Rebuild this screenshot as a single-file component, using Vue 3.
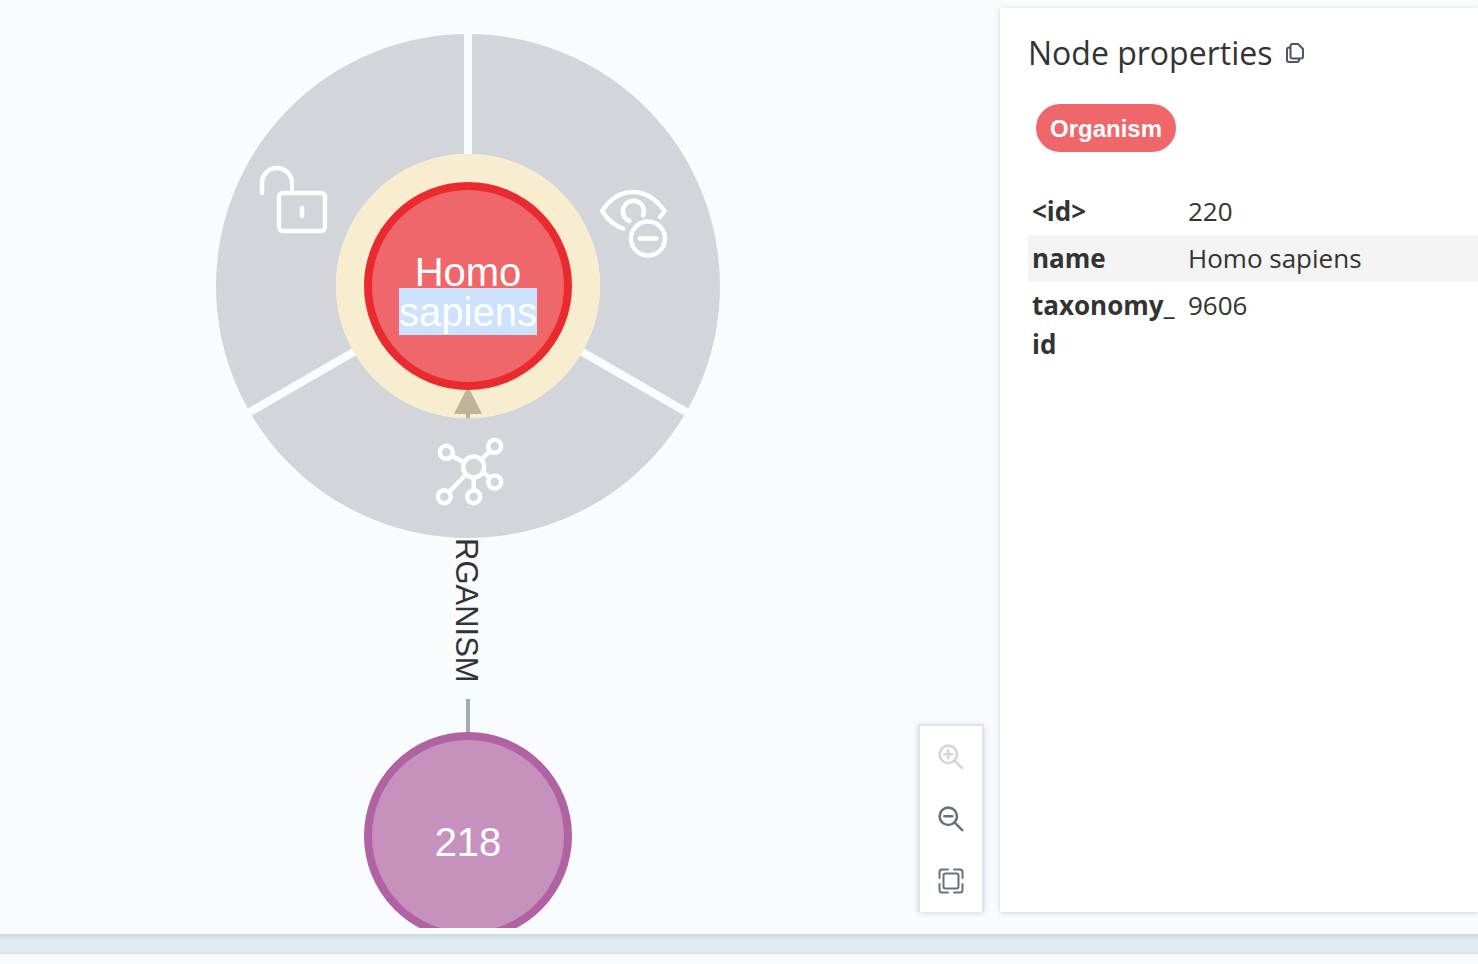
<script setup>
import { ref } from 'vue'

const centre = { x: 468, y: 286 }
const properties = ref([
  { key: '<id>', value: '220' },
  { key: 'name', value: 'Homo sapiens' },
  { key: 'taxonomy_id', value: '9606' }
])
</script>

<template>
  <div class="page">
    <main class="frame">
      <section class="canvas" aria-label="Graph">
        <svg class="graph" viewBox="0 0 1000 928" preserveAspectRatio="xMidYMin slice">
          <!-- relationship -->
          <line class="edge" x1="468" y1="699" x2="468" y2="734" />
          <text class="edge-label" transform="translate(456 538) rotate(90)">RGANISM</text>

          <!-- context menu ring -->
          <circle class="menu-ring" :cx="centre.x" :cy="centre.y" r="192" />
          <g class="menu-gap" :transform="`translate(${centre.x} ${centre.y})`">
            <line x1="0" y1="-120" x2="0" y2="-256" />
            <line x1="0" y1="-120" x2="0" y2="-256" transform="rotate(120)" />
            <line x1="0" y1="-120" x2="0" y2="-256" transform="rotate(240)" />
          </g>
          <circle class="halo" :cx="centre.x" :cy="centre.y" r="132" />
          <path class="arrow" d="M468 386 L482 414 H470 V418 H466 V414 H454 Z" />

          <!-- nodes -->
          <circle class="node organism" :cx="centre.x" :cy="centre.y" r="100" />
          <text class="caption" x="468" y="286">Homo</text>
          <rect class="selection" x="399" y="288" width="138" height="47" />
          <text class="caption" x="468" y="326">sapiens</text>
          <circle class="node protein" cx="468" cy="836" r="100" />
          <text class="caption" x="468" y="856">218</text>

          <!-- unlock -->
          <g class="menu-icon">
            <path d="M262 193 V183 A15 15 0 0 1 292 183" />
            <path class="thin" d="M292 183 V192" />
            <rect x="279" y="193" width="46" height="38" rx="4" />
            <path d="M302 208 V216" />
          </g>
          <!-- hide -->
          <g class="menu-icon">
            <path d="M623 228.500 C615 226 608 220 602 211 C610 199 621 192 633 192 C646 192 656 199 664.500 211 Q662.500 214.500 660 217" />
            <path d="M629.500 221 A10.500 10.500 0 1 1 643 215.500" />
            <circle cx="648" cy="238.500" r="17" />
            <path d="M639.500 238.500 H656.500" />
          </g>
          <!-- expand -->
          <g class="menu-icon">
            <circle cx="473.700" cy="467" r="10.500" />
            <circle cx="446.300" cy="452.300" r="6.500" />
            <circle cx="494.700" cy="446.300" r="6.500" />
            <circle cx="494.700" cy="482" r="6.500" />
            <circle cx="473.700" cy="496.700" r="6.500" />
            <circle cx="444.300" cy="496.700" r="6.500" />
            <path d="M452.500 456 L464 462.500 M490 451 L481.500 459.500 M490 477.500 L482.500 472 M473.700 478 V490 M449 492 L466 474.500" />
          </g>
        </svg>

        <div class="zoom">
          <button type="button" aria-label="Zoom in" disabled>
            <svg width="26" height="26" viewBox="0 0 26 26">
              <circle cx="10.300" cy="10.300" r="8.700" />
              <path d="M16.700 16.700 L24.200 24.200 M6.300 10.300 H14.300 M10.300 6.300 V14.300" />
            </svg>
          </button>
          <button type="button" aria-label="Zoom out">
            <svg width="26" height="26" viewBox="0 0 26 26">
              <circle cx="10.300" cy="10.300" r="8.700" />
              <path d="M16.700 16.700 L24.200 24.200 M6.300 10.300 H14.300" />
            </svg>
          </button>
          <button type="button" aria-label="Zoom to fit">
            <svg class="fit" width="26" height="26" viewBox="0 0 26 26">
              <rect x="5.500" y="5.500" width="15" height="15" rx="2" />
              <path d="M1.500 10 V4 Q1.500 1.500 4 1.500 H10 M16 1.500 H22 Q24.500 1.500 24.500 4 V10 M24.500 16 V22 Q24.500 24.500 22 24.500 H16 M10 24.500 H4 Q1.500 24.500 1.500 22 V16" />
            </svg>
          </button>
        </div>
      </section>

      <aside class="panel">
        <header class="head">
          <h2>Node properties</h2>
          <button type="button" class="copy" aria-label="Copy properties">
            <svg width="20" height="22" viewBox="0 0 20 22">
              <path d="M7.500 2 H13 L18 7 V14.500 Q18 16.500 16 16.500 H7.500 Q5.500 16.500 5.500 14.500 V4 Q5.500 2 7.500 2 Z" />
              <path d="M5.500 5.500 H4 Q2 5.500 2 7.500 V18 Q2 20 4 20 H12 Q14 20 14 18 V16.500" />
            </svg>
          </button>
        </header>
        <button type="button" class="chip">Organism</button>
        <table class="props">
          <tbody>
            <tr v-for="p in properties" :key="p.key">
              <th scope="row">{{ p.key }}</th>
              <td>{{ p.value }}</td>
            </tr>
          </tbody>
        </table>
      </aside>
    </main>
    <div class="divider"></div>
    <div class="next-frame"></div>
  </div>
</template>

<style>
html,
body {
  margin: 0;
  background: #f9fcff;
}
</style>

<style scoped>
.page {
  display: flex;
  flex-direction: column;
  min-height: 100vh;
  overflow: hidden;
  font-family: "Open Sans", "Noto Sans", sans-serif;
  color: #333;
}
.frame {
  flex: 1;
  display: grid;
  grid-template-columns: minmax(0, 1fr) 478px;
  background: #f9fcff;
}
.divider {
  height: 20px;
  background: linear-gradient(#c8d3da, #d8e2ea 3px, #e0eaf3 7px, #e0eaf3 17px, #d3dee6);
}
.next-frame {
  height: 10px;
  background: #f9fcff;
}
.canvas {
  position: relative;
  padding-bottom: 6px;
}
.graph {
  display: block;
  width: 100%;
  height: 100%;
}
.edge {
  stroke: #a5abb6;
  stroke-width: 4;
}
.edge-label {
  font: 31px "Liberation Sans", Arial, sans-serif;
  fill: #333;
}
.menu-ring {
  fill: none;
  stroke: #d2d5da;
  stroke-width: 120;
}
.menu-gap {
  stroke: #f9fcff;
  stroke-width: 8;
}
.halo {
  fill: #f9edd0;
}
.arrow {
  fill: #bfb49b;
}
.node {
  stroke-width: 8;
}
.organism {
  fill: #ef676b;
  stroke: #e92a2f;
}
.protein {
  fill: #c791be;
  stroke: #b062a3;
}
.selection {
  fill: #cce2ff;
}
.caption {
  font: 40px "Liberation Sans", Arial, sans-serif;
  fill: #fff;
  text-anchor: middle;
}
.menu-icon {
  fill: none;
  stroke: #fff;
  stroke-width: 4.4;
  stroke-linecap: round;
  stroke-linejoin: round;
}
.thin {
  stroke-width: 3.6;
}
.zoom {
  position: absolute;
  right: 16px;
  bottom: 22px;
  display: flex;
  flex-direction: column;
  background: #fff;
  border: 2px solid #dce4f0;
  border-bottom: 0;
  box-shadow: 0 1px 6px rgba(60, 70, 80, 0.2);
}
.zoom button {
  display: grid;
  place-items: center;
  width: 62px;
  height: 62px;
  padding: 0;
  border: 0;
  background: none;
  color: #6a717c;
}
.zoom button:disabled {
  color: #d3d5d8;
}
.zoom svg {
  fill: none;
  stroke: currentColor;
  stroke-width: 2.6;
  stroke-linecap: round;
}
.zoom .fit {
  stroke-width: 2;
}
.panel {
  margin: 8px 0 22px;
  padding: 21px 0 0 28px;
  background: #fff;
  box-shadow: 0 1px 5px rgba(60, 70, 80, 0.22);
}
.head {
  display: flex;
  align-items: center;
  gap: 13px;
  height: 48px;
}
h2 {
  margin: 0;
  font-size: 32px;
  font-weight: 400;
  line-height: 48px;
}
.copy {
  display: grid;
  padding: 0;
  border: 0;
  background: none;
}
.copy svg {
  fill: none;
  stroke: #4b5563;
  stroke-width: 2;
  stroke-linejoin: round;
}
.chip {
  display: block;
  margin: 27px 0 36px 8px;
  padding: 2px 14px 0;
  height: 48px;
  border: 0;
  border-radius: 24px;
  background: #ef676b;
  color: #fff;
  font: bold 24px "Liberation Sans", Arial, sans-serif;
}
.props {
  width: 100%;
  table-layout: fixed;
  border-collapse: collapse;
  font-size: 26px;
  line-height: 39px;
}
.props th,
.props td {
  padding: 4px;
  text-align: left;
  vertical-align: top;
}
.props th {
  box-sizing: border-box;
  width: 156px;
  font-weight: 700;
  word-break: break-all;
}
.props tr:nth-child(even) {
  background: #f4f4f4;
}
</style>
